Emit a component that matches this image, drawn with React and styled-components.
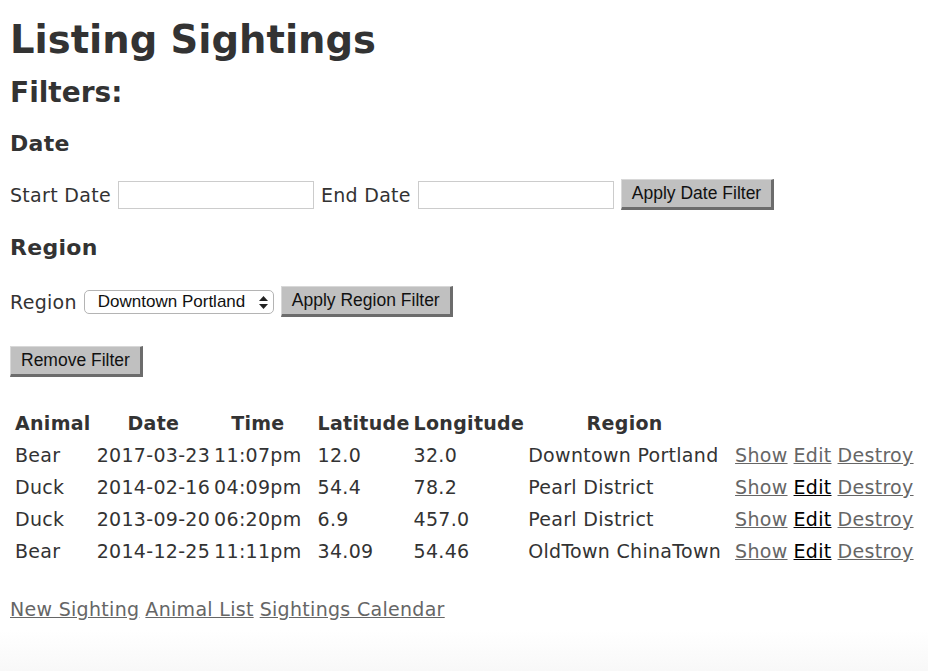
import React from "react";
import styled, { createGlobalStyle } from "styled-components";

const GlobalStyle = createGlobalStyle`
  html, body {
    margin: 0;
    padding: 0;
    background: #fff;
  }
  body {
    font-family: "DejaVu Sans", Verdana, sans-serif;
    color: #333;
    font-size: 19px;
    letter-spacing: 0.3px;
  }
`;

const Page = styled.div`
  min-height: 671px;
  padding: 18px 10px 0 10px;
  box-sizing: border-box;
  background: linear-gradient(to bottom, #fff 0, #fff 630px, #f8f8f8 671px);
`;

const Title = styled.h1`
  margin: 0;
  font-size: 38.5px;
  line-height: 44px;
  font-weight: bold;
  letter-spacing: 0;
`;

const SubTitle = styled.h2`
  margin: 15px 0 0 0;
  font-size: 28px;
  line-height: 32px;
  font-weight: bold;
  letter-spacing: 0;
`;

const SectionTitle = styled.h3`
  margin: ${(p) => p.$top || 22}px 0 0 0;
  font-size: 22px;
  line-height: 28px;
  font-weight: bold;
  letter-spacing: 0.3px;
`;

const FilterRow = styled.div`
  display: flex;
  align-items: center;
  gap: 7px;
  margin-top: ${(p) => p.$top || 0}px;
`;

const Label = styled.span`
  font-size: 19px;
`;

const TextInput = styled.input`
  width: 196px;
  height: 28px;
  box-sizing: border-box;
  border: 1px solid #ccc;
  margin: 0;
  padding: 2px 4px;
  background: #fff;
`;

const Button = styled.button`
  background: #c0c0c0;
  color: #111;
  font-family: "Liberation Sans", Arial, sans-serif;
  font-size: 17.5px;
  letter-spacing: 0;
  height: 31px;
  padding: 0 10px;
  margin: 0;
  border-style: solid;
  border-color: #d8d8d8 #6c6c6c #6c6c6c #d8d8d8;
  border-width: 1px 3px 3px 1px;
  cursor: pointer;
`;

const SelectWrap = styled.div`
  position: relative;
  display: inline-flex;
`;

const Select = styled.select`
  appearance: none;
  width: 190px;
  height: 24px;
  box-sizing: border-box;
  border: 1px solid #b4b4b4;
  border-radius: 5px;
  background: #fff;
  padding: 0 24px 0 13px;
  font-family: "Liberation Sans", Arial, sans-serif;
  font-size: 17px;
  letter-spacing: 0;
  color: #111;
  margin: 0;
`;

const Arrows = styled.svg`
  position: absolute;
  right: 6px;
  top: 6px;
  pointer-events: none;
`;

const RemoveRow = styled.div`
  margin-top: 29px;
`;

const Table = styled.table`
  margin-top: 30px;
  border-collapse: separate;
  border-spacing: 2px 0;
  margin-left: 2px;
  font-size: 19px;
`;

const Th = styled.th`
  font-weight: bold;
  text-align: center;
  height: 32px;
  padding: 0 ${(p) => p.$padRight || 1}px 0 1px;
  white-space: nowrap;
`;

const Td = styled.td`
  height: 32px;
  padding: 0 ${(p) => p.$padRight || 1}px 0 1px;
  text-align: left;
  white-space: nowrap;
`;

const LinkCell = styled.td`
  height: 32px;
  padding: 0 1px 0 5px;
  white-space: nowrap;
`;

const Link = styled.a`
  color: ${(p) => (p.$visited ? "#000" : "#666")};
  text-decoration: underline;
  margin-right: 6px;
  &:last-child {
    margin-right: 0;
  }
`;

const FooterLinks = styled.div`
  margin-top: 31px;
  font-size: 19px;
  display: flex;
`;

const sightings = [
  { animal: "Bear", date: "2017-03-23", time: "11:07pm", lat: "12.0", lng: "32.0", region: "Downtown Portland", editVisited: false },
  { animal: "Duck", date: "2014-02-16", time: "04:09pm", lat: "54.4", lng: "78.2", region: "Pearl District", editVisited: true },
  { animal: "Duck", date: "2013-09-20", time: "06:20pm", lat: "6.9", lng: "457.0", region: "Pearl District", editVisited: true },
  { animal: "Bear", date: "2014-12-25", time: "11:11pm", lat: "34.09", lng: "54.46", region: "OldTown ChinaTown", editVisited: true },
];

export default function App() {
  return (
    <>
      <GlobalStyle />
      <Page>
        <Title>Listing Sightings</Title>
        <SubTitle>Filters:</SubTitle>

        <SectionTitle $top={21}>Date</SectionTitle>
        <FilterRow $top={21}>
          <Label>Start Date</Label>
          <TextInput type="text" />
          <Label>End Date</Label>
          <TextInput type="text" />
          <Button>Apply Date Filter</Button>
        </FilterRow>

        <SectionTitle $top={24}>Region</SectionTitle>
        <FilterRow $top={24}>
          <Label>Region</Label>
          <SelectWrap>
            <Select defaultValue="Downtown Portland">
              <option>Downtown Portland</option>
              <option>Pearl District</option>
              <option>OldTown ChinaTown</option>
            </Select>
            <Arrows width="9" height="13" viewBox="0 0 9 13">
              <path d="M4.5 0 L9 5 L0 5 Z" fill="#222" />
              <path d="M0 8 L9 8 L4.5 13 Z" fill="#222" />
            </Arrows>
          </SelectWrap>
          <Button>Apply Region Filter</Button>
        </FilterRow>

        <RemoveRow>
          <Button>Remove Filter</Button>
        </RemoveRow>

        <Table>
          <thead>
            <tr>
              <Th $padRight={3}>Animal</Th>
              <Th>Date</Th>
              <Th $padRight={13}>Time</Th>
              <Th>Latitude</Th>
              <Th>Longitude</Th>
              <Th $padRight={7}>Region</Th>
              <Th colSpan={3}></Th>
            </tr>
          </thead>
          <tbody>
            {sightings.map((s, i) => (
              <tr key={i}>
                <Td $padRight={3}>{s.animal}</Td>
                <Td>{s.date}</Td>
                <Td $padRight={13}>{s.time}</Td>
                <Td>{s.lat}</Td>
                <Td>{s.lng}</Td>
                <Td $padRight={7}>{s.region}</Td>
                <LinkCell>
                  <Link href="#">Show</Link>
                  <Link href="#" $visited={s.editVisited}>Edit</Link>
                  <Link href="#">Destroy</Link>
                </LinkCell>
              </tr>
            ))}
          </tbody>
        </Table>

        <FooterLinks>
          <Link href="#">New Sighting</Link>
          <Link href="#">Animal List</Link>
          <Link href="#">Sightings Calendar</Link>
        </FooterLinks>
      </Page>
    </>
  );
}
